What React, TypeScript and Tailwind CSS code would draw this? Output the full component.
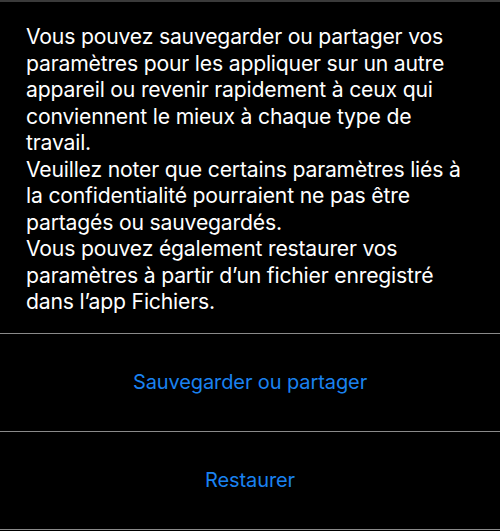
import React from "react";

const paragraphs = [
  "Vous pouvez sauvegarder ou partager vos paramètres pour les appliquer sur un autre appareil ou revenir rapidement à ceux qui conviennent le mieux à chaque type de travail.",
  "Veuillez noter que certains paramètres liés à la confidentialité pourraient ne pas être partagés ou sauvegardés.",
  "Vous pouvez également restaurer vos paramètres à partir d’un fichier enregistré dans l’app Fichiers.",
];

const actions = ["Sauvegarder ou partager", "Restaurer"];

export default function App() {
  return (
    <div className="w-[500px] h-[531px] bg-black overflow-hidden font-['Inter','Liberation_Sans',sans-serif]">
      <div className="h-[2px] bg-[#3a3a3a]" />
      <div className="pl-[26px] pr-[22px] pt-[21px] pb-[18px] text-white text-[21.2px] leading-[26.5px] tracking-[-0.2px]">
        {paragraphs.map((p, i) => (
          <p key={i}>{p}</p>
        ))}
      </div>
      {actions.map((label) => (
        <div key={label} className="border-t-[1.5px] border-[#8a8a8a]">
          <button className="w-full h-[97px] flex items-center justify-center text-[#1a82f0] text-[20px] tracking-[-0.1px]">
            {label}
          </button>
        </div>
      ))}
      <div className="border-t-[1.5px] border-[#8a8a8a]" />
    </div>
  );
}
